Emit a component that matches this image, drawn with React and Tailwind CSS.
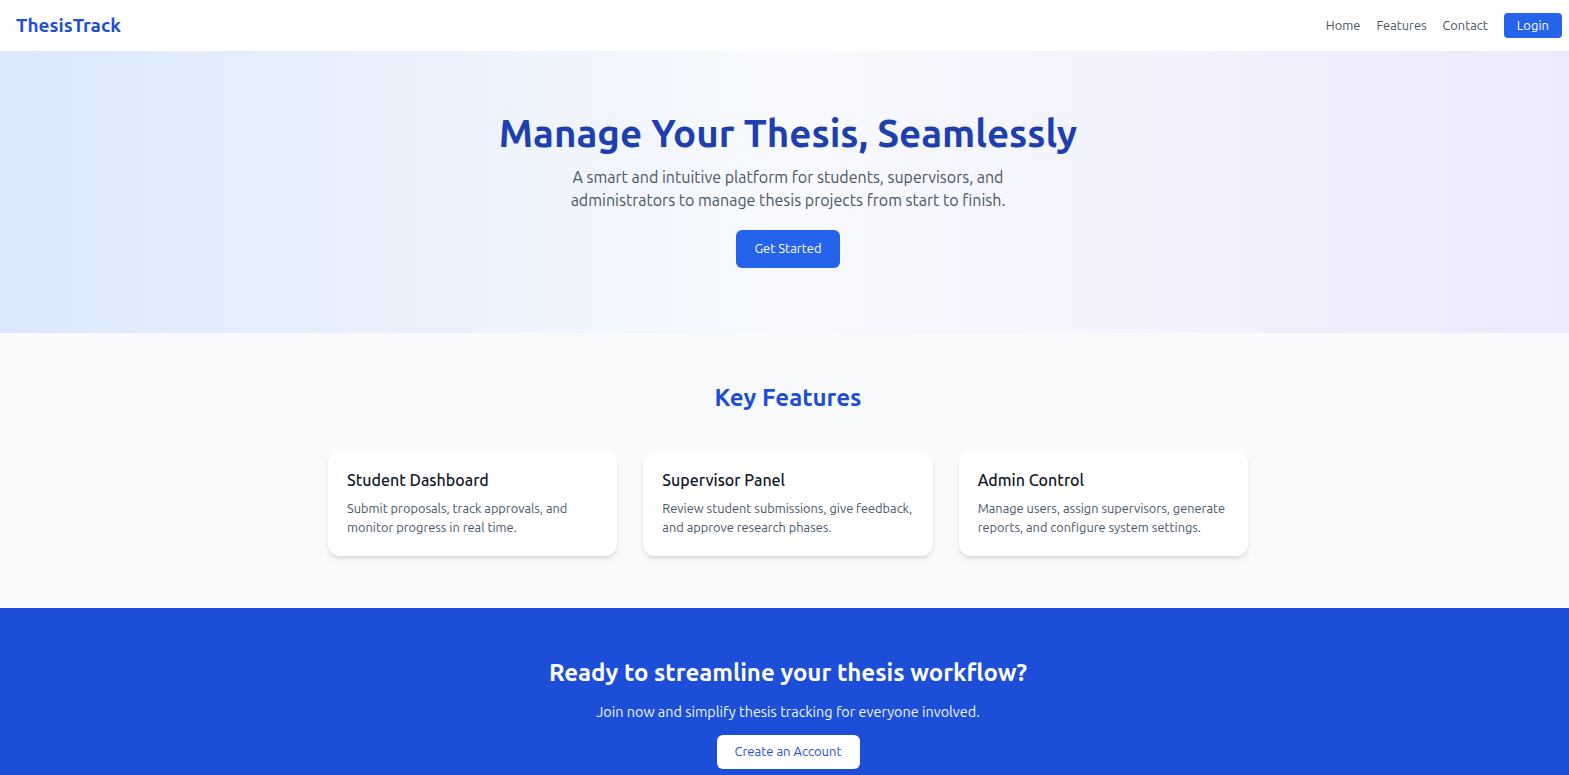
import React from 'react';

const features = [
  {
    title: 'Student Dashboard',
    desc: 'Submit proposals, track approvals, and monitor progress in real time.',
  },
  {
    title: 'Supervisor Panel',
    desc: 'Review student submissions, give feedback, and approve research phases.',
  },
  {
    title: 'Admin Control',
    desc: 'Manage users, assign supervisors, generate reports, and configure system settings.',
  },
];

export default function App() {
  return (
    <div className="min-h-screen overflow-x-hidden bg-white">
      <div className="w-[1576px] font-['Ubuntu','Open_Sans',sans-serif] text-gray-800">
        {/* Navbar */}
        <nav className="h-[51px] bg-white flex items-center justify-between pl-4 pr-[14px]">
          <span className="text-[19px] font-bold text-[#1d4ed8]">ThesisTrack</span>
          <div className="flex items-center gap-4 text-[12.8px] text-gray-600">
            <a href="#">Home</a>
            <a href="#">Features</a>
            <a href="#">Contact</a>
            <button className="bg-[#2563eb] text-white rounded px-[13px] h-[25px] text-[13px]">Login</button>
          </div>
        </nav>

        {/* Hero */}
        <section className="bg-gradient-to-r from-[#dbe8fd] via-[#f8fafd] to-[#ede9fe] h-[282px] flex flex-col items-center pt-[59px] text-center">
          <h1 className="text-[38.5px] leading-[46px] font-bold text-[#1e40af]">Manage Your Thesis, Seamlessly</h1>
          <p className="mt-[10px] text-[16px] leading-[23px] text-gray-600 max-w-[470px]">
            A smart and intuitive platform for students, supervisors, and administrators to manage thesis projects from start to finish.
          </p>
          <button className="mt-[18px] bg-[#2563eb] text-white text-[13px] rounded-md w-[104px] h-[38px]">Get Started</button>
        </section>

        {/* Features */}
        <section className="bg-[#f8fafc] h-[275px] flex flex-col items-center pt-[49px]">
          <h2 className="text-[24px] leading-[32px] font-bold text-[#1d4ed8]">Key Features</h2>
          <div className="mt-[37px] w-[920px] grid grid-cols-3 gap-[26px]">
            {features.map((f) => (
              <div key={f.title} className="bg-white rounded-xl shadow-md h-[105px] pl-[19px] pr-[16px] pt-[18px]">
                <h3 className="text-[16px] leading-[22px] font-medium text-gray-900">{f.title}</h3>
                <p className="mt-[8px] text-[12.8px] leading-[19px] text-gray-600">{f.desc}</p>
              </div>
            ))}
          </div>
        </section>

        {/* CTA */}
        <section className="bg-[#1d4ed8] flex flex-col items-center pt-[49px] pb-12 text-center">
          <h2 className="text-[24px] leading-[32px] font-bold text-white">Ready to streamline your thesis workflow?</h2>
          <p className="mt-[13px] text-[14.4px] leading-[20px] text-blue-50">Join now and simplify thesis tracking for everyone involved.</p>
          <button className="mt-[13px] bg-white text-[#1d4ed8] text-[13px] rounded-md w-[143px] h-[34px]">Create an Account</button>
        </section>
      </div>
    </div>
  );
}
